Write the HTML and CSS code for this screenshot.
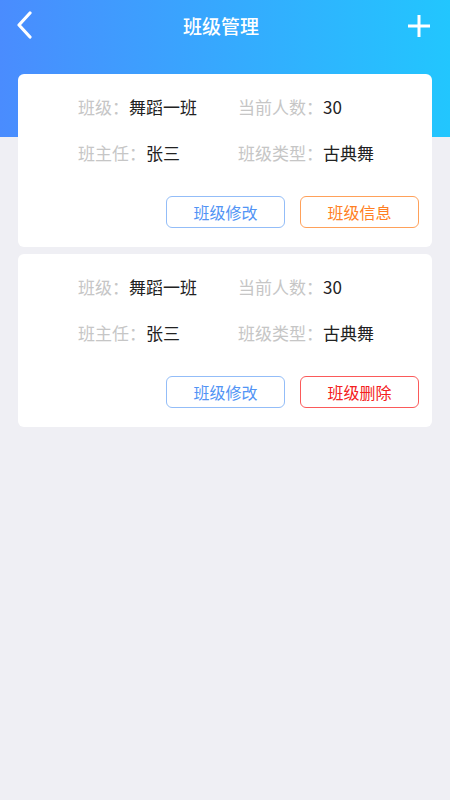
FILE: index.html
```html
<!DOCTYPE html>
<html lang="zh">
<head>
<meta charset="utf-8">
<title>班级管理</title>
<link rel="stylesheet" href="styles.css">
</head>
<body>
<header class="topbar">
  <span class="icon-btn back">
    <svg width="18" height="28" viewBox="0 0 18 28"><path d="M14 2 L3 14 L14 26" fill="none" stroke="#fff" stroke-width="3.2" stroke-linecap="round" stroke-linejoin="round"/></svg>
  </span>
  <h1 class="title">班级管理</h1>
  <span class="icon-btn add">
    <svg width="22" height="22" viewBox="0 0 22 22"><path d="M11 0 V22 M0 11 H22" fill="none" stroke="#fff" stroke-width="3"/></svg>
  </span>
</header>
<main class="list">
  <section class="card">
    <div class="info">
      <div class="field"><span class="label">班级：</span><span class="value">舞蹈一班</span></div>
      <div class="field"><span class="label">当前人数：</span><span class="value">30</span></div>
      <div class="field"><span class="label">班主任：</span><span class="value">张三</span></div>
      <div class="field"><span class="label">班级类型：</span><span class="value">古典舞</span></div>
    </div>
    <div class="actions">
      <button class="btn btn-blue">班级修改</button>
      <button class="btn btn-orange">班级信息</button>
    </div>
  </section>
  <section class="card">
    <div class="info">
      <div class="field"><span class="label">班级：</span><span class="value">舞蹈一班</span></div>
      <div class="field"><span class="label">当前人数：</span><span class="value">30</span></div>
      <div class="field"><span class="label">班主任：</span><span class="value">张三</span></div>
      <div class="field"><span class="label">班级类型：</span><span class="value">古典舞</span></div>
    </div>
    <div class="actions">
      <button class="btn btn-blue">班级修改</button>
      <button class="btn btn-red">班级删除</button>
    </div>
  </section>
</main>
</body>
</html>
```
FILE: styles.css
```css
* { box-sizing: border-box; }
html, body { height: 100%; }
body {
  margin: 0;
  font-family: "Noto Sans CJK SC", "Noto Sans", sans-serif;
  background:
    linear-gradient(90deg, #4a8cfe 0%, #22c6fe 100%) top left / 100% 137px no-repeat,
    #efeff4;
}
.topbar {
  height: 52px;
  display: flex;
  align-items: center;
  justify-content: space-between;
  padding: 0 20px 0 16px;
}
.icon-btn { display: flex; align-items: center; }
.back { margin-top: -2px; }
.add { margin-top: 0; }
.title {
  margin: 0;
  color: #fff;
  font-size: 19px;
  font-weight: 500;
  margin-top: -2px;
}
.list {
  padding: 22px 18px 0;
  display: flex;
  flex-direction: column;
  gap: 7px;
}
.card {
  background: #fff;
  border-radius: 6px;
  height: 173px;
  padding: 20px 13px 19px 60px;
  display: flex;
  flex-direction: column;
}
.info {
  display: grid;
  grid-template-columns: 160px 1fr;
  row-gap: 20px;
}
.field {
  display: flex;
  align-items: center;
  font-size: 17px;
  line-height: 26px;
}
.label { color: #c6c6c6; }
.value { color: #222; }
.actions {
  margin-top: auto;
  display: flex;
  justify-content: flex-end;
  gap: 15px;
}
.btn {
  width: 119px;
  height: 32px;
  background: #fff;
  border-radius: 6px;
  border: 1px solid;
  font-family: inherit;
  font-size: 16px;
  padding: 0;
}
.btn-blue { border-color: #93bdf8; color: #5294f5; }
.btn-orange { border-color: #ffa15a; color: #ff7f24; }
.btn-red { border-color: #fb5a5a; color: #f42020; }
```
